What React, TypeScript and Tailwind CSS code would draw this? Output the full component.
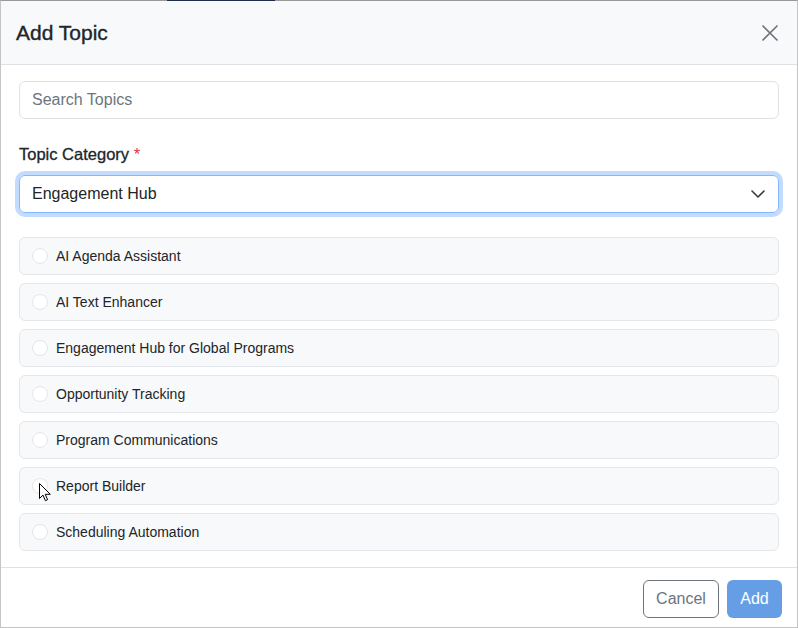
import { useState } from "react";

const topics = [
  "AI Agenda Assistant",
  "AI Text Enhancer",
  "Engagement Hub for Global Programs",
  "Opportunity Tracking",
  "Program Communications",
  "Report Builder",
  "Scheduling Automation",
];

export default function App() {
  const [selected, setSelected] = useState<string | null>(null);

  return (
    <div
      className="relative w-[798px] h-[628px] box-border border border-[#c4c4c4] border-t-[#9a9a9a] bg-white flex flex-col text-[#212529]"
      style={{ fontFamily: '"Liberation Sans", Arial, sans-serif' }}
    >
      {/* strip of the page behind */}
      <div className="absolute -top-px left-[166px] w-[108px] h-px bg-[#1f2d4d]" />

      {/* header */}
      <div className="h-[64px] shrink-0 bg-[#f8f9fa] border-b border-[#dee2e6] flex items-center justify-between pl-[15px] pr-[18px]">
        <h1 className="text-[21px] leading-none font-medium [-webkit-text-stroke:0.35px_#212529]">Add Topic</h1>
        <button className="w-[18px] h-[18px] flex items-center justify-center">
          <svg width="18" height="18" viewBox="0 0 18 18" fill="none">
            <path d="M1.5 1.5 16.5 16.5M16.5 1.5 1.5 16.5" stroke="#6c757d" strokeWidth="1.6" />
          </svg>
        </button>
      </div>

      {/* body */}
      <div className="flex-1 px-[18px] pt-4 pb-4 flex flex-col">
        <input
          placeholder="Search Topics"
          className="h-[38px] w-full rounded-md border border-[#dee2e6] px-3 text-[16px] placeholder:text-[#6c757d] outline-none"
        />

        <label className="mt-6 mb-[10px] h-[22px] text-[16.5px] leading-[22px] font-medium [-webkit-text-stroke:0.3px_#212529]">
          Topic Category <span className="text-[#dc3545] [-webkit-text-stroke:0]">*</span>
        </label>

        <div className="relative h-[38px] rounded-md border border-[#86b7fe] shadow-[0_0_0_4px_rgba(13,110,253,0.25)] flex items-center pl-3 pr-3">
          <span className="flex-1 text-[16px]">Engagement Hub</span>
          <svg width="16" height="16" viewBox="0 0 16 16" fill="none">
            <path d="m2 5 6 6 6-6" stroke="#343a40" strokeWidth="1.6" strokeLinecap="round" strokeLinejoin="round" />
          </svg>
        </div>

        <ul className="mt-6 flex flex-col gap-2">
          {topics.map((t) => (
            <li
              key={t}
              onClick={() => setSelected(t)}
              className="h-[38px] rounded-md border border-[#e3e6ea] bg-[#f8f9fa] flex items-center pl-3 gap-2 cursor-pointer"
            >
              <span
                className={`w-4 h-4 rounded-full border ${
                  selected === t ? "border-[#0d6efd] border-[5px]" : "border-[#e3e6ea]"
                } bg-white`}
              />
              <span className="text-[14px]">{t}</span>
            </li>
          ))}
        </ul>
      </div>

      {/* footer */}
      <div className="h-[60px] shrink-0 border-t border-[#dee2e6] flex justify-end items-start pt-3 pr-[15px] gap-2">
        <button className="h-[38px] w-[76px] rounded-md border border-[#6c757d] text-[#6c757d] text-[16px]">
          Cancel
        </button>
        <button className="h-[38px] w-[55px] rounded-md bg-[#669ee6] text-white text-[16px]">
          Add
        </button>
      </div>

      {/* mouse pointer */}
      <svg
        className="absolute left-[38px] top-[482px]"
        width="12"
        height="19"
        viewBox="0 0 12 19"
        fill="none"
      >
        <path
          d="M0.5 0.5v15l3.5-3.4 2.4 5.6 2.2-1-2.4-5.4h5.1z"
          fill="#fff"
          stroke="#000"
          strokeWidth="1"
          strokeLinejoin="round"
        />
      </svg>
    </div>
  );
}
